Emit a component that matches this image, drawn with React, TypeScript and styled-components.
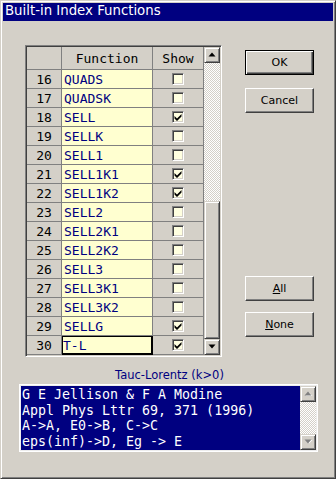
import React from 'react';
import styled, { createGlobalStyle, css } from 'styled-components';

const Global = createGlobalStyle`
  html, body { margin: 0; padding: 0; background: #d4d0c8; }
  #root { width: 336px; height: 479px; }
`;

const Window = styled.div`
  box-sizing: border-box;
  width: 336px;
  height: 479px;
  background: #d4d0c8;
  border: 1px solid;
  border-color: #d4d0c8 #404040 #404040 #d4d0c8;
  box-shadow: inset 1px 1px 0 #fff, inset -1px -1px 0 #808080;
  padding: 2px;
  display: flex;
  flex-direction: column;
`;

const TitleBar = styled.div`
  height: 18px;
  line-height: 18px;
  background: #000080;
  color: #fff;
  font: 13.3px "DejaVu Sans", sans-serif;
  padding-left: 2px;
  white-space: nowrap;
`;

const TopRow = styled.div`
  display: flex;
  align-items: flex-start;
  margin: 24px 0 0 22px;
`;

const GridFrame = styled.div`
  box-sizing: border-box;
  width: 197px;
  height: 312px;
  border: 1px solid;
  border-color: #808080 #fff #fff #808080;
  box-shadow: inset 1px 1px 0 #404040, inset -1px -1px 0 #d4d0c8;
  padding: 1px;
  display: flex;
`;

const Table = styled.div`
  width: 177px;
  display: flex;
  flex-direction: column;
`;

const Row = styled.div<{ $header?: boolean }>`
  display: grid;
  grid-template-columns: 35px 91px 51px;
  height: ${p => (p.$header ? 23 : 19)}px;
`;

const Cell = styled.div<{ $kind: 'fixed' | 'text' | 'check'; $focus?: boolean }>`
  box-sizing: border-box;
  border-right: 1px solid #808080;
  border-bottom: 1px solid #808080;
  font: 13px "DejaVu Sans Mono", monospace;
  display: flex;
  align-items: center;
  white-space: nowrap;
  overflow: hidden;
  ${p =>
    p.$kind === 'fixed' &&
    css`
      background: #d4d0c8;
      color: #000;
      justify-content: center;
    `}
  ${p =>
    p.$kind === 'text' &&
    css`
      background: #ffffd0;
      color: #000080;
      padding-left: 2px;
    `}
  ${p =>
    p.$kind === 'check' &&
    css`
      background: #d4d0c8;
      justify-content: center;
    `}
  ${p =>
    p.$focus &&
    css`
      border-right-color: #000;
      border-bottom-color: #000;
      box-shadow: inset 1px 1px 0 #000, inset -1px -1px 0 #000;
      padding-left: 1px;
    `}
`;

const CheckBox = styled.span`
  box-sizing: border-box;
  width: 12px;
  height: 12px;
  display: inline-flex;
  align-items: center;
  justify-content: center;
  background: #ffffe0;
  border: 1px solid;
  border-color: #808080 #fff #fff #808080;
  box-shadow: inset 1px 1px 0 #404040, inset -1px -1px 0 #d4d0c8;
  margin-top: -1px;
`;

const ScrollBar = styled.div`
  width: 16px;
  display: flex;
  flex-direction: column;
  flex-shrink: 0;
`;

const ScrollBtn = styled.div`
  box-sizing: border-box;
  width: 16px;
  height: 16px;
  background: #d4d0c8;
  border: 1px solid;
  border-color: #d4d0c8 #404040 #404040 #d4d0c8;
  box-shadow: inset 1px 1px 0 #fff, inset -1px -1px 0 #808080;
  display: flex;
  align-items: center;
  justify-content: center;
  flex-shrink: 0;
`;

const Track = styled.div`
  flex: 1;
  background: repeating-conic-gradient(#d4d0c8 0 25%, #ffffff 0 50%) 0 0 / 2px 2px;
`;

const Thumb = styled.div`
  box-sizing: border-box;
  width: 16px;
  background: #d4d0c8;
  border: 1px solid;
  border-color: #d4d0c8 #404040 #404040 #d4d0c8;
  box-shadow: inset 1px 1px 0 #fff, inset -1px -1px 0 #808080;
  flex-shrink: 0;
`;

const ButtonColumn = styled.div`
  display: flex;
  flex-direction: column;
  margin-left: 23px;
  margin-top: 5px;
`;

const Btn = styled.button<{ $default?: boolean; $gap: number }>`
  box-sizing: border-box;
  width: 69px;
  height: 25px;
  padding: 0;
  margin: ${p => p.$gap}px 0 0 0;
  background: #d4d0c8;
  color: #000;
  font: 11px "DejaVu Sans", sans-serif;
  border: 1px solid;
  border-color: #fff #404040 #404040 #fff;
  box-shadow: inset -1px -1px 0 #808080;
  ${p =>
    p.$default &&
    css`
      border-color: #000;
      box-shadow: inset 1px 1px 0 #fff, inset -1px -1px 0 #404040, inset -2px -2px 0 #808080;
    `}
`;

const Lower = styled.div`
  display: flex;
  flex-direction: column;
  margin-left: 16px;
  width: 299px;
`;

const Caption = styled.div`
  margin-top: 11px;
  height: 14px;
  line-height: 14px;
  text-align: center;
  color: #000080;
  font: 11.5px "DejaVu Sans", sans-serif;
  padding-left: 2px;
`;

const Memo = styled.div`
  box-sizing: border-box;
  margin-top: 2px;
  height: 68px;
  border: 1px solid #fff;
  box-shadow: inset 0 0 0 1px #ececec;
  padding: 1px;
  display: flex;
  background: #000080;
`;

const MemoText = styled.div`
  flex: 1;
  color: #fff;
  font: 13.3px "DejaVu Sans Mono", monospace;
  line-height: 15.5px;
  padding: 1px 0 0 1px;
  white-space: pre;
  overflow: hidden;
`;

const Arrow = ({ dir, disabled }: { dir: 'up' | 'down'; disabled?: boolean }) => (
  <svg width="9" height="6" viewBox="0 0 9 6">
    {disabled && (
      <polygon
        points={dir === 'up' ? '1.5,5 8.5,5 5,1.5' : '1.5,1 8.5,1 5,4.5'}
        fill="#ffffff"
      />
    )}
    <polygon
      points={dir === 'up' ? '0.5,4.5 7.5,4.5 4,0.5' : '0.5,0.5 7.5,0.5 4,4.5'}
      fill={disabled ? '#808080' : '#000'}
    />
  </svg>
);

const Tick = () => (
  <svg width="8" height="8" viewBox="0 0 8 8">
    <polygon points="0.5,3 3,5.5 7.5,1 7.5,3.5 3,8 0.5,5.5" fill="#000" />
  </svg>
);

const rows: [number, string, boolean][] = [
  [16, 'QUADS', false],
  [17, 'QUADSK', false],
  [18, 'SELL', true],
  [19, 'SELLK', false],
  [20, 'SELL1', false],
  [21, 'SELL1K1', true],
  [22, 'SELL1K2', true],
  [23, 'SELL2', false],
  [24, 'SELL2K1', false],
  [25, 'SELL2K2', false],
  [26, 'SELL3', false],
  [27, 'SELL3K1', false],
  [28, 'SELL3K2', false],
  [29, 'SELLG', true],
  [30, 'T-L', true],
];

const memo = [
  'G E Jellison & F A Modine',
  'Appl Phys Lttr 69, 371 (1996)',
  'A->A, E0->B, C->C',
  'eps(inf)->D, Eg -> E',
].join('\n');

export default function App() {
  return (
    <>
      <Global />
      <Window>
        <TitleBar>Built-in Index Functions</TitleBar>
        <TopRow>
          <GridFrame>
            <Table>
              <Row $header>
                <Cell $kind="fixed" />
                <Cell $kind="fixed">Function</Cell>
                <Cell $kind="fixed">Show</Cell>
              </Row>
              {rows.map(([n, name, on]) => (
                <Row key={n}>
                  <Cell $kind="fixed">{n}</Cell>
                  <Cell $kind="text" $focus={n === 30}>
                    {name}
                  </Cell>
                  <Cell $kind="check">
                    <CheckBox>{on && <Tick />}</CheckBox>
                  </Cell>
                </Row>
              ))}
            </Table>
            <ScrollBar>
              <ScrollBtn>
                <Arrow dir="up" />
              </ScrollBtn>
              <Track />
              <Thumb style={{ height: 138 }} />
              <ScrollBtn>
                <Arrow dir="down" />
              </ScrollBtn>
            </ScrollBar>
          </GridFrame>
          <ButtonColumn>
            <Btn $default $gap={0}>OK</Btn>
            <Btn $gap={13}>Cancel</Btn>
            <Btn $gap={163}>
              <u>A</u>ll
            </Btn>
            <Btn $gap={11}>
              <u>N</u>one
            </Btn>
          </ButtonColumn>
        </TopRow>
        <Lower>
          <Caption>Tauc-Lorentz (k&gt;0)</Caption>
          <Memo>
            <MemoText>{memo}</MemoText>
            <ScrollBar>
              <ScrollBtn>
                <Arrow dir="up" disabled />
              </ScrollBtn>
              <Track />
              <ScrollBtn>
                <Arrow dir="down" disabled />
              </ScrollBtn>
            </ScrollBar>
          </Memo>
        </Lower>
      </Window>
    </>
  );
}
